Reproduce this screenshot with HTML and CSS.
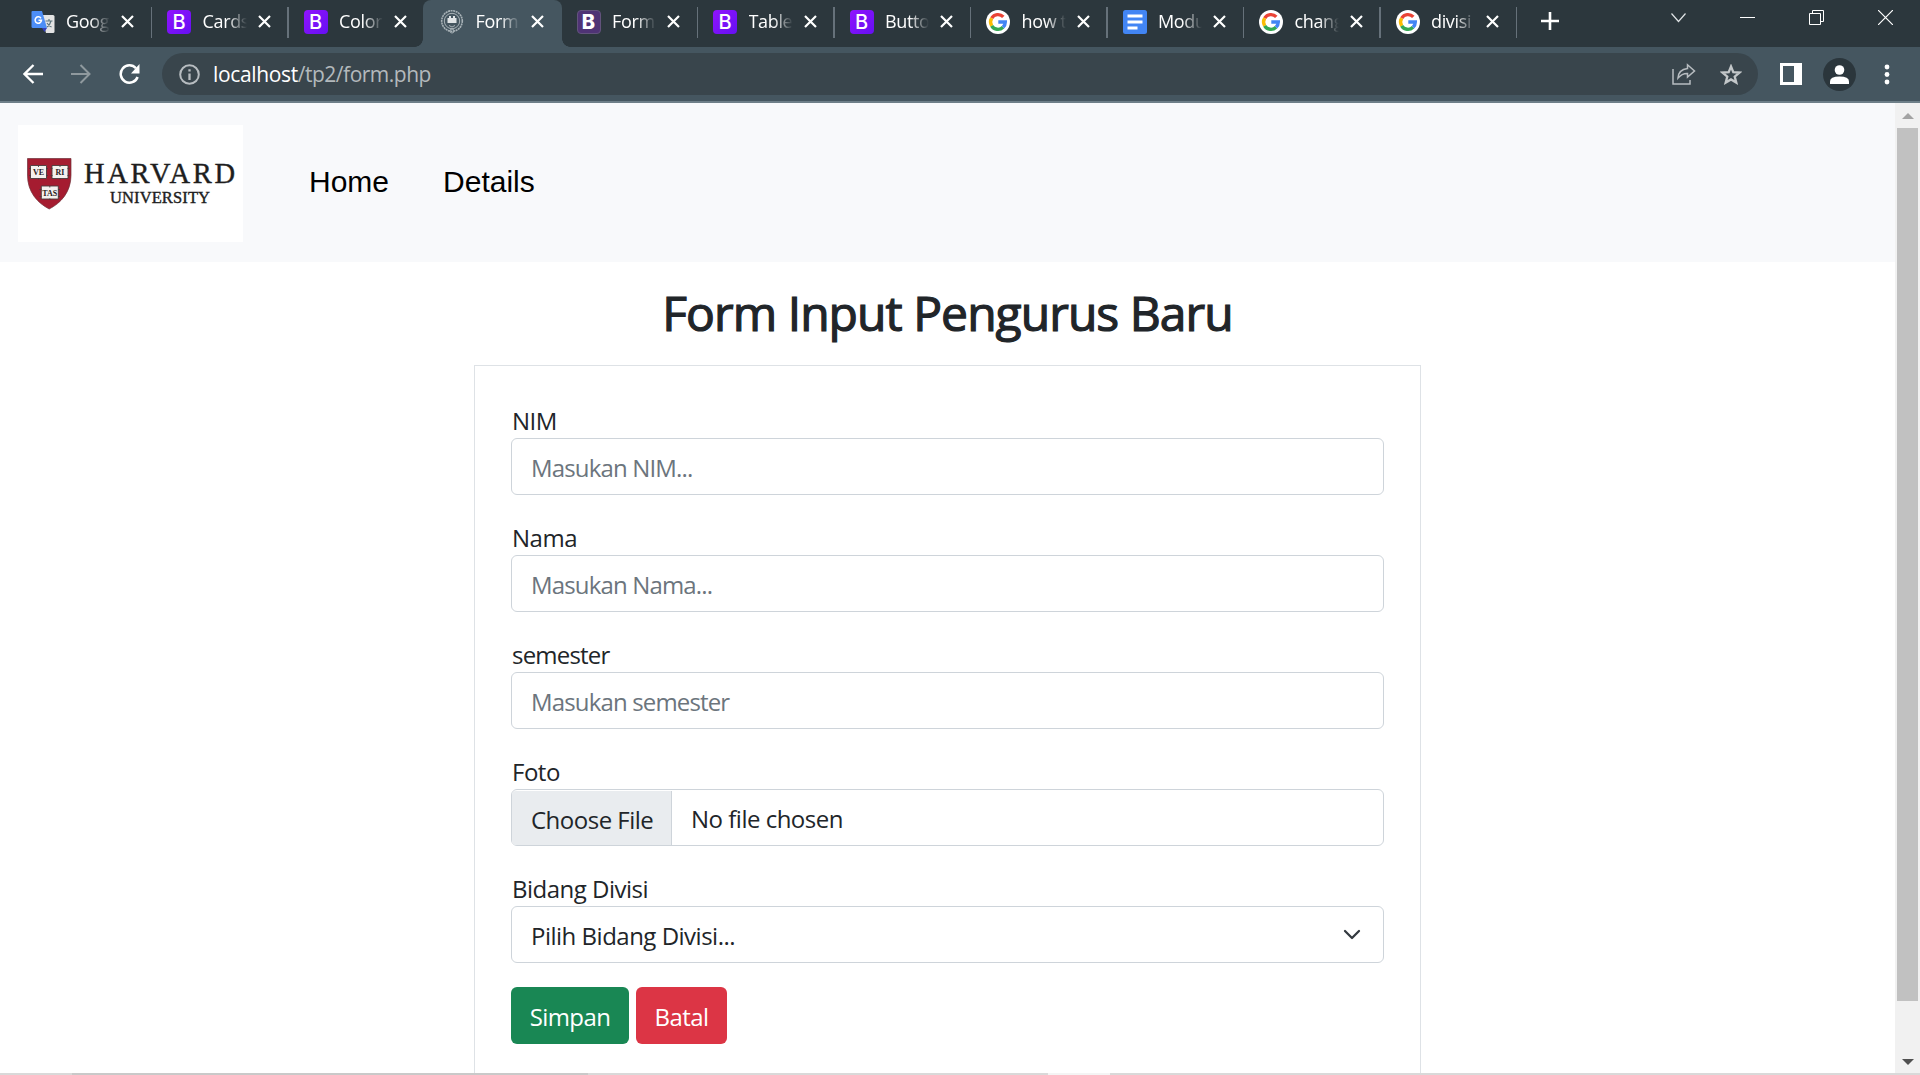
FILE: index.html
```html
<!DOCTYPE html>
<html lang="id">
<head>
<meta charset="utf-8">
<title>Form</title>
<link rel="stylesheet" href="styles.css">
</head>
<body>
<svg class="defs" width="0" height="0">
  <defs>
    <symbol id="x" viewBox="0 0 13 13"><path d="M1 1 12 12M12 1 1 12" stroke="#fff" stroke-width="2.2" fill="none"/></symbol>
    <symbol id="google" viewBox="0 0 24 24"><circle cx="12" cy="12" r="12" fill="#fff"/><g fill="none" stroke-width="3.4"><path d="M5.7 8.2A7.3 7.3 0 0 1 17.3 6.9" stroke="#ea4335"/><path d="M5.7 15.8A7.3 7.3 0 0 1 5.7 8.2" stroke="#fbbc05"/><path d="M17 17.3A7.3 7.3 0 0 1 5.7 15.8" stroke="#34a853"/><path d="M12.3 12H19.3A7.3 7.3 0 0 1 17 17.3" stroke="#4285f4"/></g></symbol>
  </defs>
</svg>
<header class="browser">
  <div class="tabstrip">
    <div class="tab"><svg class="fav" viewBox="0 0 24 24"><path d="M10 5h12q1.500 0 1.500 1.500v15q0 1.500-1.500 1.500H15z" fill="#e4e4e4"/><path d="M1.500 1H11l5 17H2Q.5 18 .5 16.500V2q0-1 1-1z" fill="#4d8ef7"/><path d="M11 18h5l-2.500 4z" fill="#3541bb"/><path d="M10 8.300a3.200 3.200 0 1 0 .5 2H7.500" fill="none" stroke="#fff" stroke-width="1.500"/><path d="M14.500 11h7M18 9v2M20 11q-1 4-4 6M16 13q2 3 4.500 4" fill="none" stroke="#5f7780" stroke-width="1.200"/></svg><span class="name">Goog</span><svg class="close"><use href="#x"/></svg></div>
    <div class="tab"><span class="fav bs">B</span><span class="name">Cards</span><svg class="close"><use href="#x"/></svg></div>
    <div class="tab nosep"><span class="fav bs">B</span><span class="name">Color</span><svg class="close"><use href="#x"/></svg></div>
    <div class="tab active"><svg class="fav" viewBox="0 0 24 24" fill="none" stroke="#a9b3b8"><circle cx="12" cy="11" r="10.300" stroke-width="1.600" stroke-dasharray="2 .6"/><circle cx="12" cy="11" r="7.700" stroke-width="1"/><path d="M7.500 8h9v5h-9z" fill="#e0e4e6" stroke="none"/><path d="M9 6h2v2H9zM13 6h2v2h-2z" fill="#e0e4e6" stroke="none"/><path d="M9 15.500 12 17l3-1.500"/><circle cx="12" cy="21" r="2"/></svg><span class="name">Form</span><svg class="close"><use href="#x"/></svg></div>
    <div class="tab"><span class="fav bs old">B</span><span class="name">Form</span><svg class="close"><use href="#x"/></svg></div>
    <div class="tab"><span class="fav bs">B</span><span class="name">Table</span><svg class="close"><use href="#x"/></svg></div>
    <div class="tab"><span class="fav bs">B</span><span class="name">Butto</span><svg class="close"><use href="#x"/></svg></div>
    <div class="tab"><svg class="fav"><use href="#google"/></svg><span class="name">how t</span><svg class="close"><use href="#x"/></svg></div>
    <div class="tab"><svg class="fav" viewBox="0 0 24 24"><rect width="24" height="24" rx="2.500" fill="#4285f4"/><path d="M4.500 6h15M4.500 12h15M4.500 18h10" stroke="#fff" stroke-width="3"/></svg><span class="name">Modu</span><svg class="close"><use href="#x"/></svg></div>
    <div class="tab"><svg class="fav"><use href="#google"/></svg><span class="name">chang</span><svg class="close"><use href="#x"/></svg></div>
    <div class="tab"><svg class="fav"><use href="#google"/></svg><span class="name">divisi</span><svg class="close"><use href="#x"/></svg></div>
    <svg class="plus" viewBox="0 0 18 18"><path d="M9 0v18M0 9h18" stroke="#fff" stroke-width="2.600"/></svg>
    <div class="window">
      <svg width="16" height="10" viewBox="0 0 16 10"><path d="m.5.500 7 8 7-8" fill="none" stroke="#dfe3e5" stroke-width="1.200"/></svg>
      <svg width="15" height="15" viewBox="0 0 15 15"><path d="M0 7.500h15" stroke="#fff"/></svg>
      <svg width="15" height="15" viewBox="0 0 15 15"><path d="M.5 3.500h11v11H.5zM3.500 3.500v-3h11v11h-3" fill="none" stroke="#fff"/></svg>
      <svg width="15" height="15" viewBox="0 0 15 15"><path d="m0 0 15 15M15 0 0 15" stroke="#fff" stroke-width="1.200"/></svg>
    </div>
  </div>
  <div class="toolbar">
    <svg class="back" width="20" height="20" viewBox="0 0 20 20" fill="none" stroke="#fff" stroke-width="2.300"><path d="M20 10H1.500M10.500 1 1.500 10l9 9"/></svg>
    <svg class="fwd" width="20" height="20" viewBox="0 0 20 20" fill="none" stroke="#8f999e" stroke-width="2"><path d="M0 10h18.500M9.500 1l9 9-9 9"/></svg>
    <svg class="reload" width="21" height="21" viewBox="0 0 21 21"><path d="M17 4.300A8.700 8.700 0 1 0 18.600 13" fill="none" stroke="#fff" stroke-width="2.500"/><path d="M20.500 0v9.500H12z" fill="#fff"/></svg>
    <div class="omnibox">
      <svg width="21" height="21" viewBox="0 0 21 21" fill="none" stroke="#b7bcc0" stroke-width="2"><circle cx="10.500" cy="10.500" r="9.300"/><path d="M10.500 9.500V16M10.500 5.300v2.200" stroke-width="2.300"/></svg>
      <span class="url"><b>localhost</b>/tp2/form.php</span>
      <svg class="share" width="24" height="22" viewBox="0 0 24 22" fill="none" stroke="#b7bcc0" stroke-width="1.500"><path d="M1 6v15h17v-4"/><path d="M15.500 1.800 22.500 8l-7 6V10.500Q10 10.300 6 15q.5-8.500 9.500-9.500z"/></svg>
      <svg class="star" width="22" height="21" viewBox="0 0 22 21"><path d="m11 2.500 2.300 5.700 6.200.4-4.800 4 1.600 6L11 15.400l-5.300 3.200 1.600-6-4.800-4 6.200-.4z" fill="none" stroke="#c3c7c9" stroke-width="2.300"/></svg>
    </div>
    <svg class="panel" width="22" height="22" viewBox="0 0 22 22"><path d="M0 0h22v22H0zM3 3v16h11V3z" fill="#fff" fill-rule="evenodd"/></svg>
    <svg class="avatar" width="33" height="33" viewBox="0 0 33 33"><circle cx="16.500" cy="16.500" r="16.500" fill="#2b363c"/><circle cx="16.500" cy="12" r="4.800" fill="#fff"/><path d="M7 26v-2.500q0-5 9.500-5t9.500 5V26z" fill="#fff"/></svg>
    <svg class="dots" width="6" height="21" viewBox="0 0 6 21" fill="#fff"><circle cx="3" cy="3" r="2.400"/><circle cx="3" cy="10.500" r="2.400"/><circle cx="3" cy="18" r="2.400"/></svg>
  </div>
</header>
<div class="viewport">
  <div class="page">
    <nav class="navbar">
      <svg class="logo" width="225" height="117" viewBox="0 0 225 117">
        <rect width="225" height="117" fill="#fff"/>
        <path d="M9.500 33.500h43.500V50C53 67 43 78 31.200 84 19.500 78 9.500 67 9.500 50z" fill="#a51c30" stroke="#6d3038" stroke-width=".7"/>
        <g fill="#f4f1ee" stroke="#4a3a3a" stroke-width=".9"><path d="M12.500 40.500h16v13h-16zM34 40.500h16v13H34zM23.300 61h17v13h-17z"/><path d="M11 43.500h2M28 43.500h2M11 50.500h2M28 50.500h2M32.500 43.500h2M49.500 43.500h2M32.500 50.500h2M49.500 50.500h2M21.500 64.500h2M40 64.500h2M21.500 71.500h2M40 71.500h2M20.500 53v1.500M42 53v1.500M31.800 73.500v1.500M20.500 40.500v1.500M42 40.500v1.500M31.800 61v1.500"/></g>
        <g class="motto"><text x="20.500" y="50.200">VE</text><text x="42" y="50.200">RI</text><text x="31.800" y="70.700">TAS</text></g>
        <text class="wordmark" x="66" y="58" textLength="151">HARVARD</text>
        <text class="wordmark small" x="92" y="78" textLength="100">UNIVERSITY</text>
      </svg>
      <a class="link">Home</a>
      <a class="link">Details</a>
    </nav>
    <h1 class="title">Form Input Pengurus Baru</h1>
    <form class="card">
      <label class="label">NIM</label>
      <div class="control hint"><span>Masukan NIM...</span></div>
      <label class="label">Nama</label>
      <div class="control hint"><span>Masukan Nama...</span></div>
      <label class="label tight">semester</label>
      <div class="control hint"><span>Masukan semester</span></div>
      <label class="label">Foto</label>
      <div class="control file"><span class="choose">Choose File</span><span>No file chosen</span></div>
      <label class="label">Bidang Divisi</label>
      <div class="control select"><span>Pilih Bidang Divisi...</span><svg width="18" height="12" viewBox="0 0 18 12"><path d="m2 2 7 7 7-7" fill="none" stroke="#343a40" stroke-width="2.300" stroke-linecap="round" stroke-linejoin="round"/></svg></div>
      <div class="buttons"><span class="btn save">Simpan</span><span class="btn cancel">Batal</span></div>
    </form>
  </div>
  <div class="scrollbar"><i class="up"></i><div class="thumb"></div><i class="down"></i></div>
</div>
<div class="edge"></div>
</body>
</html>
```
FILE: styles.css
```css
* { box-sizing: border-box; }
body { margin: 0; width: 1920px; height: 1075px; overflow: hidden; display: flex; flex-direction: column; background: #fff; color: #212529; font-family: "Open Sans", "Noto Sans", sans-serif; }
svg { display: block; flex: none; }
.defs { display: none; }
.browser { flex: none; height: 103px; background: #455660; border-bottom: 2px solid #6e7f88; }
.tabstrip { height: 47px; background: #2c373d; display: flex; align-items: flex-start; padding-left: 15px; }
.tab { flex: none; width: 136.5px; height: 47px; padding: 0 17.500px 4px 15.500px; display: flex; align-items: center; position: relative; color: #fff; font-size: 18px; letter-spacing: -.35px; }
.tab::after { content: ""; position: absolute; right: -.500px; top: 7px; width: 1.500px; height: 31px; background: #66717a; }
.tab.nosep::after { display: none; }
.tab.active { width: 139px; margin: 0 -1px 0 -1.500px; padding: 0 18px 4px 17px; background: #455660; border-radius: 8px 8px 0 0; }
.tab.active::before, .tab.active::after { content: ""; position: absolute; top: 39px; width: 8px; height: 8px; }
.tab.active::before { left: -8px; background: radial-gradient(circle at 0 0, transparent 7.500px, #455660 8px); }
.tab.active::after { right: -8px; background: radial-gradient(circle at 100% 0, transparent 7.500px, #455660 8px); }
.fav { width: 24px; height: 24px; flex: none; margin-right: 11.500px; }
.bs { border-radius: 4px; background: linear-gradient(135deg, #9013fe, #6610f2); font: 500 20px/24px "Inter", sans-serif; text-align: center; letter-spacing: 0; }
.bs.old { background: #4f3375; border: 1px solid #62537c; line-height: 22px; font-weight: 800; }
.name { width: 44px; margin-top: -2px; white-space: nowrap; -webkit-mask-image: linear-gradient(90deg, #000 55%, transparent); mask-image: linear-gradient(90deg, #000 55%, transparent); }
.close { width: 13px; height: 13px; margin-left: auto; }
.plus { width: 18px; height: 18px; margin: 12px 0 0 24px; }
.window { display: flex; align-items: center; gap: 54px; margin: 10px 27px 0 auto; }
.window svg:first-child { margin-right: -1px; }
.toolbar { height: 54px; display: flex; align-items: center; padding: 0 30px 0 23px; }
.fwd { margin-left: 28px; }
.reload { margin-left: 28px; }
.omnibox { width: 1596px; height: 42px; margin-left: 22px; border-radius: 21px; background: #39454c; display: flex; align-items: center; padding: 0 16px 0 17px; }
.url { margin-left: 13px; color: #b3b9bc; font-size: 21px; letter-spacing: -.5px; white-space: nowrap; }
.url b { font-weight: 400; color: #fff; letter-spacing: -.350px; }
.share { margin-left: auto; }
.star { margin-left: 24px; }
.panel { margin-left: 22px; }
.avatar { margin-left: 21px; }
.dots { margin-left: auto; }
.viewport { flex: none; height: 970px; display: flex; overflow: hidden; }
.page { width: 1895px; }
.navbar { height: 158.5px; background: #f8f9fb; display: flex; align-items: center; padding-left: 18px; }
.logo { margin-top: 2px; }
.motto { font: bold 8px "Liberation Serif", serif; text-anchor: middle; fill: #2b2020; }
.wordmark { font: 28.500px "Liberation Serif", serif; fill: #1e1e1e; stroke: #1e1e1e; stroke-width: .4px; }
.wordmark.small { font-size: 16.500px; }
.link { margin-left: 66px; color: #000; font: 30px "Liberation Sans", Arial, sans-serif; margin-top: -1px; }
.link + .link { margin-left: 54px; }
.title { margin: 20.5px 0 0; height: 83px; text-align: center; font-weight: 400; font-size: 48px; line-height: 62px; letter-spacing: -.95px; -webkit-text-stroke: 1.2px #212529; }
.card { width: 947px; height: 760px; margin: 0 auto; border: 1px solid #dee2e6; padding: 36px; }
.label { display: block; height: 36px; padding-left: 1px; line-height: 38px; font-size: 24px; letter-spacing: -.500px; }
.label.tight { letter-spacing: -.8px; }
.control { height: 57px; margin-bottom: 24px; border: 1px solid #ced4da; border-radius: 6px; padding: 3px 19px 0; display: flex; align-items: center; line-height: 36px; font-size: 24px; letter-spacing: -.500px; white-space: nowrap; }
.hint { color: #6c757d; letter-spacing: -.850px; }
.file { padding: 0; }
.choose { height: 54px; width: 160px; background: #e9ecef; border-right: 1px solid #ced4da; padding-left: 19px; margin-right: 19px; border-radius: 4px 0 0 4px; line-height: 57px; }
.file span:last-child { padding-top: 3px; }
.select { justify-content: space-between; padding-right: 22px; }
.select svg { margin-top: -3px; }
.buttons { display: flex; gap: 7px; }
.btn { height: 57px; width: 118px; border-radius: 6px; color: #fff; font-size: 24px; line-height: 60px; text-align: center; letter-spacing: -.600px; }
.save { background: #198754; }
.cancel { width: 91px; background: #dc3545; }
.scrollbar { width: 25px; background: #f1f1f1; display: flex; flex-direction: column; align-items: center; }
.up, .down { border: 6px solid transparent; border-top: 0; border-bottom: 6px solid #a3a3a3; margin-top: 10px; }
.thumb { width: 21px; height: 873px; margin-top: 9px; background: #c1c1c1; }
.down { border-bottom: 0; border-top: 6px solid #505050; margin: auto 0 8px; }
.edge { height: 2px; background: linear-gradient(90deg, #d9d9d9 72px, #c9c9c9 72px, #c9c9c9 588px, #d9d9d9 588px, #d9d9d9 1048px, #f4f4f4 1048px, #f4f4f4 1110px, #d9d9d9 1110px); }
```
